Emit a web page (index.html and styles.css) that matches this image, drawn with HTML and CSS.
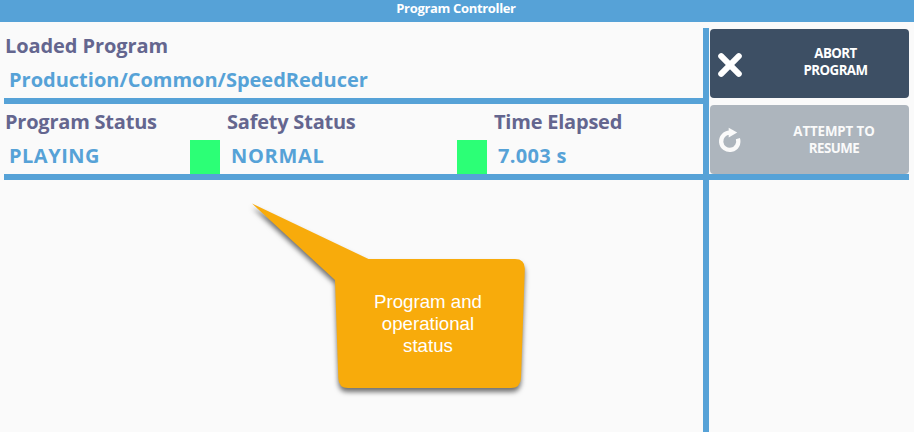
FILE: index.html
```html
<!DOCTYPE html>
<html lang="en">
<head>
<meta charset="utf-8">
<title>Program Controller</title>
<link rel="stylesheet" href="styles.css">
</head>
<body>
<header class="titlebar"><span class="title">Program Controller</span></header>
<main class="panel">
  <section class="loaded field">
    <div class="label"><span class="t-loaded">Loaded Program</span></div>
    <div class="value"><span class="t-path">Production/Common/SpeedReducer</span></div>
  </section>
  <div class="rule rule-top"></div>
  <section class="statuses">
    <div class="field">
      <div class="label"><span class="tight">Program Status</span></div>
      <div class="value"><span class="t-playing">PLAYING</span></div>
    </div>
    <div class="lamp"></div>
    <div class="field">
      <div class="label shifted"><span class="tight">Safety Status</span></div>
      <div class="value shifted"><span class="t-normal">NORMAL</span></div>
    </div>
    <div class="lamp"></div>
    <div class="field">
      <div class="label shifted"><span class="tight">Time Elapsed</span></div>
      <div class="value shifted"><span class="t-seconds">7.003 s</span></div>
    </div>
  </section>
  <div class="rule rule-bottom"></div>
  <div class="divider"></div>
  <button class="action abort">
    <svg class="icon" viewBox="0 0 40 69"><path d="M11.200 27.200L28.800 44.800M28.800 27.200L11.200 44.800" fill="none" stroke="#fff" stroke-width="6" stroke-linecap="round"/></svg>
    <span class="caption">ABORT<br>PROGRAM</span>
  </button>
  <button class="action resume" disabled>
    <svg class="icon" viewBox="0 0 40 69"><path d="M27.900 33.600A8.600 8.600 0 1 1 19.700 27.700" fill="none" stroke="#fafafa" stroke-width="4.300"/><path d="M18.700 22.800L27.200 27.500L18.700 32.500Z" fill="#fafafa"/></svg>
    <span class="caption"><span class="t-attempt">ATTEMPT TO</span><br>RESUME</span>
  </button>
</main>
<aside class="callout">
  <svg class="bubble" viewBox="0 0 300 210"><path d="M12 13.500L128.500 69H275Q285 69 284.800 79L281 188Q280.500 198 271 198H108Q98.500 198 98.300 188L95 90Z" fill="#f8ab0b"/></svg>
  <p class="note">Program and<br>operational<br>status</p>
</aside>
</body>
</html>
```
FILE: styles.css
```css
* { box-sizing: border-box; }
body {
  margin: 0;
  height: 432px;
  display: flex;
  flex-direction: column;
  overflow: hidden;
  position: relative;
  background: #fafafa;
  font-family: "Open Sans", "Noto Sans", sans-serif;
  font-weight: 700;
}
.titlebar {
  height: 22px;
  flex: none;
  background: #56a2d7;
  color: #fff;
  text-align: center;
  font-size: 13px;
  line-height: 17px;
  letter-spacing: -.33px;
  padding-right: 2px;
}
.panel {
  flex: 1;
  display: grid;
  grid-template-columns: 699px 6px 1px 199px;
  grid-template-rows: 70px 6px 70px 6px 1fr;
  padding: 6px 5px 0 4px;
}
.panel span, .titlebar span { white-space: nowrap; }
.loaded { grid-area: 1 / 1; }
.rule { background: #56a2d7; }
.rule-top { grid-area: 2 / 1; }
.rule-bottom { grid-area: 4 / 1 / 5 / -1; z-index: 1; }
.divider { grid-area: 1 / 2 / -1 / 3; background: #56a2d7; }
.statuses {
  grid-area: 3 / 1;
  display: grid;
  grid-template-columns: 186px 30px 237px 30px 1fr;
}
.label, .value {
  height: 34px;
  line-height: 36px;
  font-size: 20px;
}
.label { color: #64668f; padding-left: 1px; }
.value { color: #56a2d7; padding-left: 5px; }
.label.shifted { padding-left: 7px; }
.value.shifted { padding-left: 11px; }
.t-loaded { letter-spacing: -.08px; }
.tight { letter-spacing: -.22px; }
.t-playing { letter-spacing: .5px; }
.t-normal { letter-spacing: .7px; }
.t-seconds { letter-spacing: .3px; }
.lamp { height: 34px; align-self: end; background: #2cff76; }
.action {
  display: flex;
  align-items: center;
  border: 0;
  border-radius: 4px;
  padding: 0;
  height: 69px;
  color: #fff;
  font: 700 13.300px/17px "Open Sans", "Noto Sans", sans-serif;
  letter-spacing: -.55px;
}
.abort { grid-area: 1 / 4; margin-top: 1px; background: #3d4f64; }
.abort .caption { width: 171px; }
.resume { grid-area: 2 / 4 / 4 / 5; margin-top: 1px; align-self: end; background: #adb5bd; color: #fafafa; }
.t-attempt { letter-spacing: -.1px; }
.icon { width: 40px; height: 69px; flex: none; }
.caption { width: 168px; flex: none; text-align: center; padding-bottom: 4px; }
.resume .caption { padding-bottom: 0; }
.callout { position: absolute; left: 240px; top: 190px; width: 300px; height: 210px; }
.bubble { display: block; width: 300px; height: 210px; overflow: visible; filter: drop-shadow(0 4px 2.500px rgba(0, 0, 0, .55)); }
.note {
  position: absolute;
  left: 98px;
  top: 101px;
  width: 180px;
  margin: 0;
  color: #fff;
  text-align: center;
  font: 400 18.670px/22px "Liberation Sans", sans-serif;
}
```
